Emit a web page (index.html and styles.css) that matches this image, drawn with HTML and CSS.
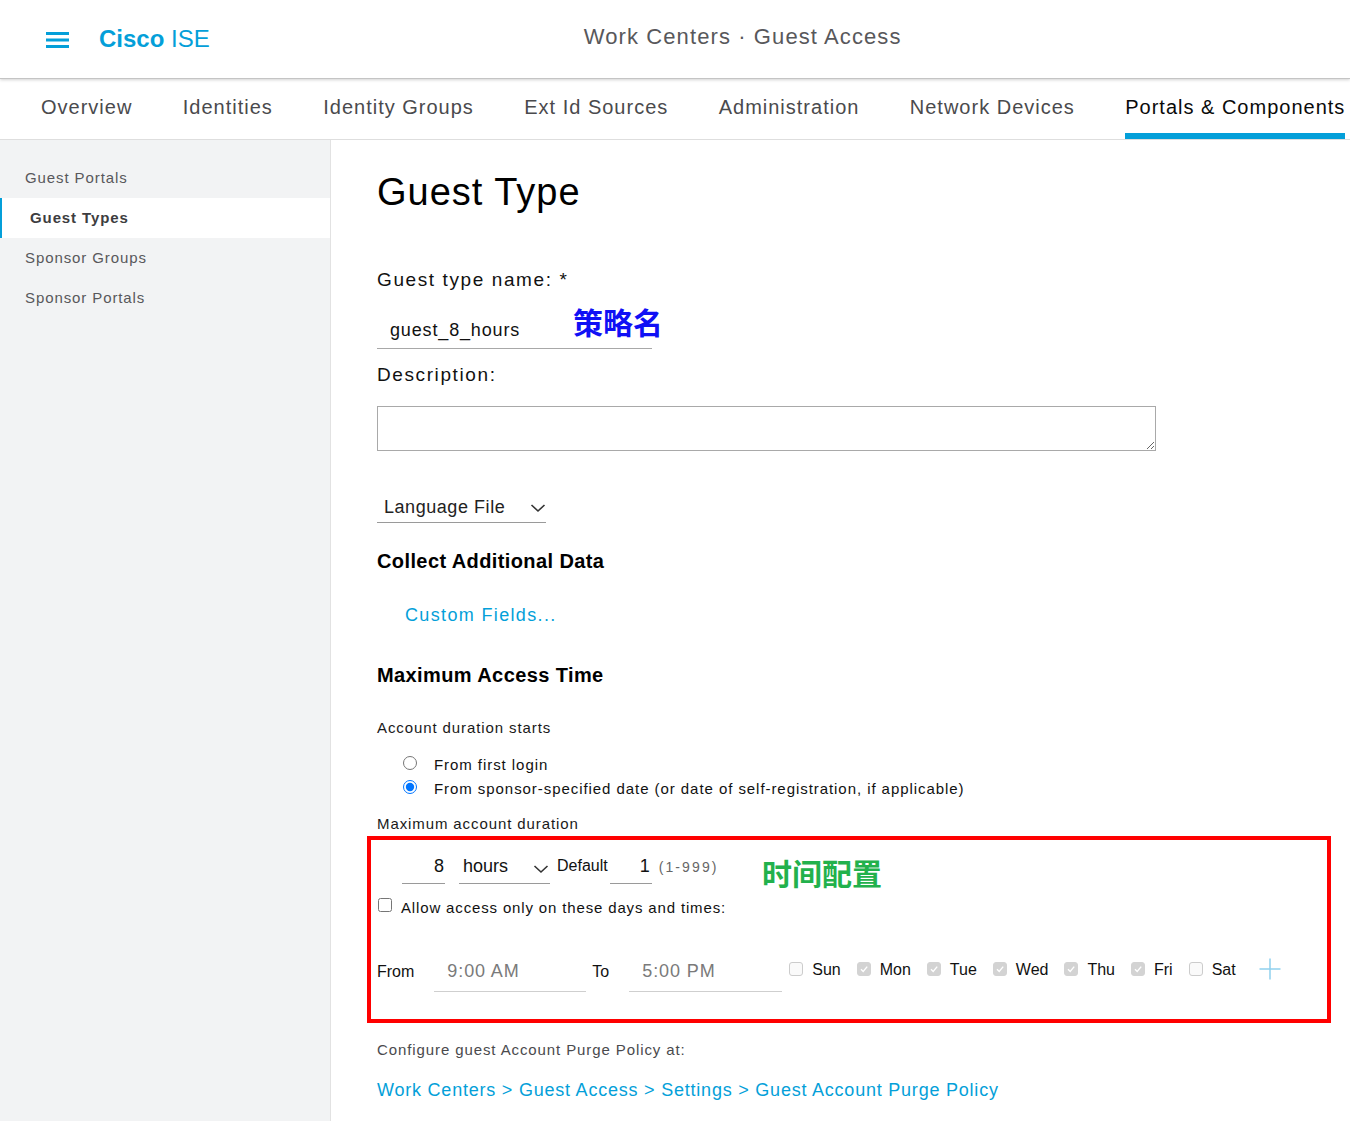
FILE: index.html
```html
<!DOCTYPE html>
<html lang="en">
<head>
<meta charset="utf-8">
<title>Guest Type</title>
<link rel="stylesheet" href="styles.css">
</head>
<body>
<header class="topbar">
  <svg class="menu-icon" width="23" height="16" viewBox="0 0 23 16"><rect x="0" y="0" width="23" height="3"/><rect x="0" y="6.5" width="23" height="3"/><rect x="0" y="13" width="23" height="3"/></svg>
  <div class="brand"><b>Cisco</b> ISE</div>
  <div class="page-title">Work Centers · Guest Access</div>
</header>
<nav class="tabs">
  <span class="tab">Overview</span>
  <span class="tab">Identities</span>
  <span class="tab">Identity Groups</span>
  <span class="tab">Ext Id Sources</span>
  <span class="tab">Administration</span>
  <span class="tab">Network Devices</span>
  <span class="tab active">Portals &amp; Components</span>
</nav>
<div class="layout">
  <aside class="sidebar">
    <div class="side-item">Guest Portals</div>
    <div class="side-item active">Guest Types</div>
    <div class="side-item">Sponsor Groups</div>
    <div class="side-item">Sponsor Portals</div>
  </aside>
  <main class="content">
    <h1 class="page-heading">Guest Type</h1>
    <div class="field-label first">Guest type name: *</div>
    <div class="name-row">
      <div class="text-input name-input">guest_8_hours</div>
      <span class="note note-blue">策略名</span>
    </div>
    <div class="field-label desc-label">Description:</div>
    <textarea class="desc-area"></textarea>
    <div class="select lang-select">
      <span>Language File</span>
      <svg class="chev" width="16" height="10" viewBox="0 0 16 10"><polyline points="1.5,2 8,8 14.5,2"/></svg>
    </div>
    <h2 class="section-title collect">Collect Additional Data</h2>
    <div class="link custom-fields">Custom Fields...</div>
    <h2 class="section-title max-time">Maximum Access Time</h2>
    <div class="small-label starts">Account duration starts</div>
    <label class="radio-row first-radio"><input type="radio" name="start"><span>From first login</span></label>
    <label class="radio-row"><input type="radio" name="start" checked><span>From sponsor-specified date (or date of self-registration, if applicable)</span></label>
    <div class="small-label max-dur">Maximum account duration</div>
    <div class="red-box">
      <div class="duration-row">
        <div class="num-input dur-num">8</div>
        <div class="select hours-select">
          <span>hours</span>
          <svg class="chev" width="16" height="10" viewBox="0 0 16 10"><polyline points="1.5,2 8,8 14.5,2"/></svg>
        </div>
        <span class="plain default-label">Default</span>
        <div class="num-input def-num">1</div>
        <span class="range">(1-999)</span>
        <span class="note note-green">时间配置</span>
      </div>
      <label class="allow-row"><input type="checkbox"><span>Allow access only on these days and times:</span></label>
      <div class="time-row">
        <span class="plain">From</span>
        <div class="time-input from-input">9:00 AM</div>
        <span class="plain to-label">To</span>
        <div class="time-input to-input">5:00 PM</div>
        <div class="days">
          <span class="day"><span class="box"></span>Sun</span>
          <span class="day"><span class="box on"><svg width="10" height="10" viewBox="0 0 10 10"><polyline points="2,5.2 4.2,7.4 8.2,2.6"/></svg></span>Mon</span>
          <span class="day"><span class="box on"><svg width="10" height="10" viewBox="0 0 10 10"><polyline points="2,5.2 4.2,7.4 8.2,2.6"/></svg></span>Tue</span>
          <span class="day"><span class="box on"><svg width="10" height="10" viewBox="0 0 10 10"><polyline points="2,5.2 4.2,7.4 8.2,2.6"/></svg></span>Wed</span>
          <span class="day"><span class="box on"><svg width="10" height="10" viewBox="0 0 10 10"><polyline points="2,5.2 4.2,7.4 8.2,2.6"/></svg></span>Thu</span>
          <span class="day"><span class="box on"><svg width="10" height="10" viewBox="0 0 10 10"><polyline points="2,5.2 4.2,7.4 8.2,2.6"/></svg></span>Fri</span>
          <span class="day"><span class="box"></span>Sat</span>
        </div>
        <svg class="plus" width="22" height="22" viewBox="0 0 22 22"><line x1="11" y1="0.5" x2="11" y2="21.5"/><line x1="0.5" y1="11" x2="21.5" y2="11"/></svg>
      </div>
    </div>
    <div class="small-label purge">Configure guest Account Purge Policy at:</div>
    <div class="link purge-link">Work Centers &gt; Guest Access &gt; Settings &gt; Guest Account Purge Policy</div>
  </main>
</div>
</body>
</html>
```
FILE: styles.css
```css
* { box-sizing: border-box; }
html, body { margin: 0; padding: 0; }
body {
  font-family: "Liberation Sans", Arial, sans-serif;
  color: #0d0d0d;
  background: #fff;
  letter-spacing: 0.05em;
  width: 1350px;
  min-height: 1121px;
  overflow: hidden;
}

/* top bar */
.topbar {
  height: 79px;
  display: flex;
  align-items: center;
  padding-left: 46px;
  border-bottom: 1px solid #c4c4c4;
  box-shadow: 0 1px 3px rgba(0,0,0,0.18);
  position: relative;
  z-index: 2;
  background: #fff;
}
.menu-icon { fill: #049fd9; margin-top: 2px; }
.brand {
  margin-left: 30px;
  font-size: 24px;
  letter-spacing: 0;
  color: #049fd9;
  margin-top: 0;
}
.brand b { font-weight: 700; }
.page-title {
  margin-left: 374px;
  font-size: 22px;
  letter-spacing: 1.1px;
  color: #58585b;
  margin-top: -4px;
}

/* tabs */
.tabs {
  display: flex;
  gap: 50.4px;
  padding-left: 41px;
  height: 61px;
  border-bottom: 1px solid #dedede;
  background: #fff;
}
.tab {
  height: 60px;
  display: flex;
  align-items: center;
  font-size: 20px;
  letter-spacing: 1px;
  color: #4a4a4d;
  border-bottom: 6px solid transparent;
  padding-top: 2px;
  white-space: nowrap;
}
.tab.active {
  color: #0a0a0a;
  border-bottom-color: #049fd9;
}

/* layout */
.layout {
  display: flex;
  min-height: 981px;
}
.sidebar {
  width: 331px;
  flex: none;
  background: #f2f3f4;
  border-right: 1px solid #e2e2e2;
  padding-top: 18px;
}
.side-item {
  height: 40px;
  line-height: 40px;
  padding-left: 25px;
  font-size: 15px;
  letter-spacing: 0.9px;
  color: #58585b;
}
.side-item.active {
  background: #fff;
  border-left: 2px solid #049fd9;
  padding-left: 28px;
  font-weight: 700;
  color: #3d3d40;
}

.content {
  flex: 1;
  padding-left: 46px;
  padding-top: 29px;
}
.page-heading {
  margin: 0;
  font-size: 38px;
  line-height: 46px;
  font-weight: 400;
  letter-spacing: 1px;
  color: #000;
}
.field-label {
  font-size: 19px;
  line-height: 24px;
  letter-spacing: 1.6px;
  color: #111;
}
.field-label.first { margin-top: 53px; }
.name-row { position: relative; margin-top: 20px; width: 275px; }
.text-input {
  height: 37px;
  border-bottom: 1px solid #a8a8a8;
  font-size: 18px;
  letter-spacing: 0.85px;
  display: flex;
  align-items: center;
  padding-left: 13px;
  padding-top: 1px;
  color: #111;
}
.note {
  position: absolute;
  font-family: "Noto Sans CJK SC", sans-serif;
  font-weight: 700;
  font-size: 30px;
  line-height: 30px;
  letter-spacing: 0;
  white-space: nowrap;
}
.note-blue { color: #1010f5; left: 196px; top: -6px; }
.note-green { color: #22b14c; left: 385px; top: 7px; }

.desc-label { margin-top: 14px; }
.desc-area {
  display: block;
  margin: 19px 0 0 0;
  width: 779px;
  height: 45px;
  border: 1px solid #a9a9a9;
  border-radius: 0;
  padding: 2px;
  font-family: inherit;
}
.select {
  display: flex;
  align-items: center;
  justify-content: space-between;
  border-bottom: 1px solid #9a9a9a;
  font-size: 18px;
}
.chev { fill: none; stroke: #333; stroke-width: 1.6; }
.lang-select {
  margin-top: 39px;
  width: 169px;
  height: 33px;
  padding-left: 7px;
  padding-top: 3px;
  padding-right: 0;
  letter-spacing: 0.55px;
  color: #222;
}
.section-title {
  margin: 0;
  font-size: 20px;
  line-height: 24px;
  font-weight: 700;
  letter-spacing: 0.4px;
  color: #000;
}
.collect { margin-top: 26px; }
.link {
  color: #049fd9;
  font-size: 18px;
  line-height: 24px;
}
.custom-fields { margin-top: 30px; margin-left: 28px; letter-spacing: 1.35px; }
.max-time { margin-top: 36px; }
.small-label {
  font-size: 15px;
  line-height: 20px;
  letter-spacing: 0.9px;
  color: #1a1a1a;
}
.starts { margin-top: 31px; }
.radio-row {
  display: flex;
  align-items: center;
  height: 24px;
  padding-left: 26px;
  font-size: 15px;
  letter-spacing: 0.94px;
  color: #111;
}
.first-radio { margin-top: 14px; }
.radio-row input {
  width: 14px;
  height: 14px;
  margin: 0;
  margin-top: -3px;
}
.radio-row span { margin-left: 17px; }
.max-dur { margin-top: 14px; }

/* red annotation box */
.red-box {
  margin-top: 2px;
  margin-left: -10px;
  width: 964px;
  height: 187px;
  border: 4px solid #ff0000;
  padding: 10px 0 0 6px;
}
.duration-row {
  position: relative;
  display: flex;
  align-items: center;
  height: 34px;
}
.num-input {
  height: 34px;
  border-bottom: 1px solid #9a9a9a;
  display: flex;
  align-items: center;
  justify-content: flex-end;
  font-size: 18px;
  letter-spacing: 0;
  padding-right: 1px;
  color: #111;
}
.dur-num { margin-left: 25px; width: 43px; }
.hours-select {
  margin-left: 14px;
  width: 91px;
  height: 34px;
  padding-left: 4px;
  padding-right: 1px;
  letter-spacing: 0;
  color: #111;
}
.hours-select .chev { margin-top: 4px; }
.plain {
  font-size: 16px;
  letter-spacing: 0;
  color: #111;
}
.default-label { margin-left: 7px; margin-top: -2px; }
.def-num { margin-left: 2px; width: 42px; padding-right: 2px; }
.range {
  margin-left: 7px;
  font-size: 14px;
  letter-spacing: 2.1px;
  color: #666;
}
.allow-row {
  display: flex;
  align-items: center;
  height: 22px;
  margin-top: 12px;
  font-size: 15px;
  letter-spacing: 0.85px;
  color: #111;
}
.allow-row input {
  width: 14px;
  height: 14px;
  margin: 0 0 0 1px;
  margin-top: -4px;
}
.allow-row span { margin-left: 9px; }
.time-row {
  display: flex;
  align-items: center;
  height: 40px;
  margin-top: 34px;
}
.time-input {
  height: 40px;
  border-bottom: 1px solid #cfcfcf;
  display: flex;
  align-items: center;
  padding-left: 13px;
  font-size: 18px;
  letter-spacing: 0.9px;
  color: #7a7a7a;
}
.from-input { margin-left: 20px; width: 152px; }
.to-label { margin-left: 6px; }
.to-input { margin-left: 20px; width: 153px; }
.days {
  display: flex;
  gap: 16px;
  margin-left: 7px;
  margin-top: -4px;
}
.day {
  display: flex;
  align-items: center;
  font-size: 16px;
  letter-spacing: 0;
  color: #111;
}
.box {
  width: 14px;
  height: 14px;
  margin-right: 9px;
  border: 1px solid #cccccc;
  border-radius: 3px;
  background: #fafafa;
  display: flex;
  align-items: center;
  justify-content: center;
  margin-top: -3px;
}
.box.on { background: #d3d3d3; border-color: #d3d3d3; }
.box svg { fill: none; stroke: #fff; stroke-width: 1.4; }
.plus {
  margin-left: 23px;
  margin-top: -6px;
  stroke: #8fd0ee;
  stroke-width: 1.5;
}
.purge { margin-top: 17px; color: #4a4a4d; }
.purge-link { margin-top: 18px; letter-spacing: 0.78px; }
```
